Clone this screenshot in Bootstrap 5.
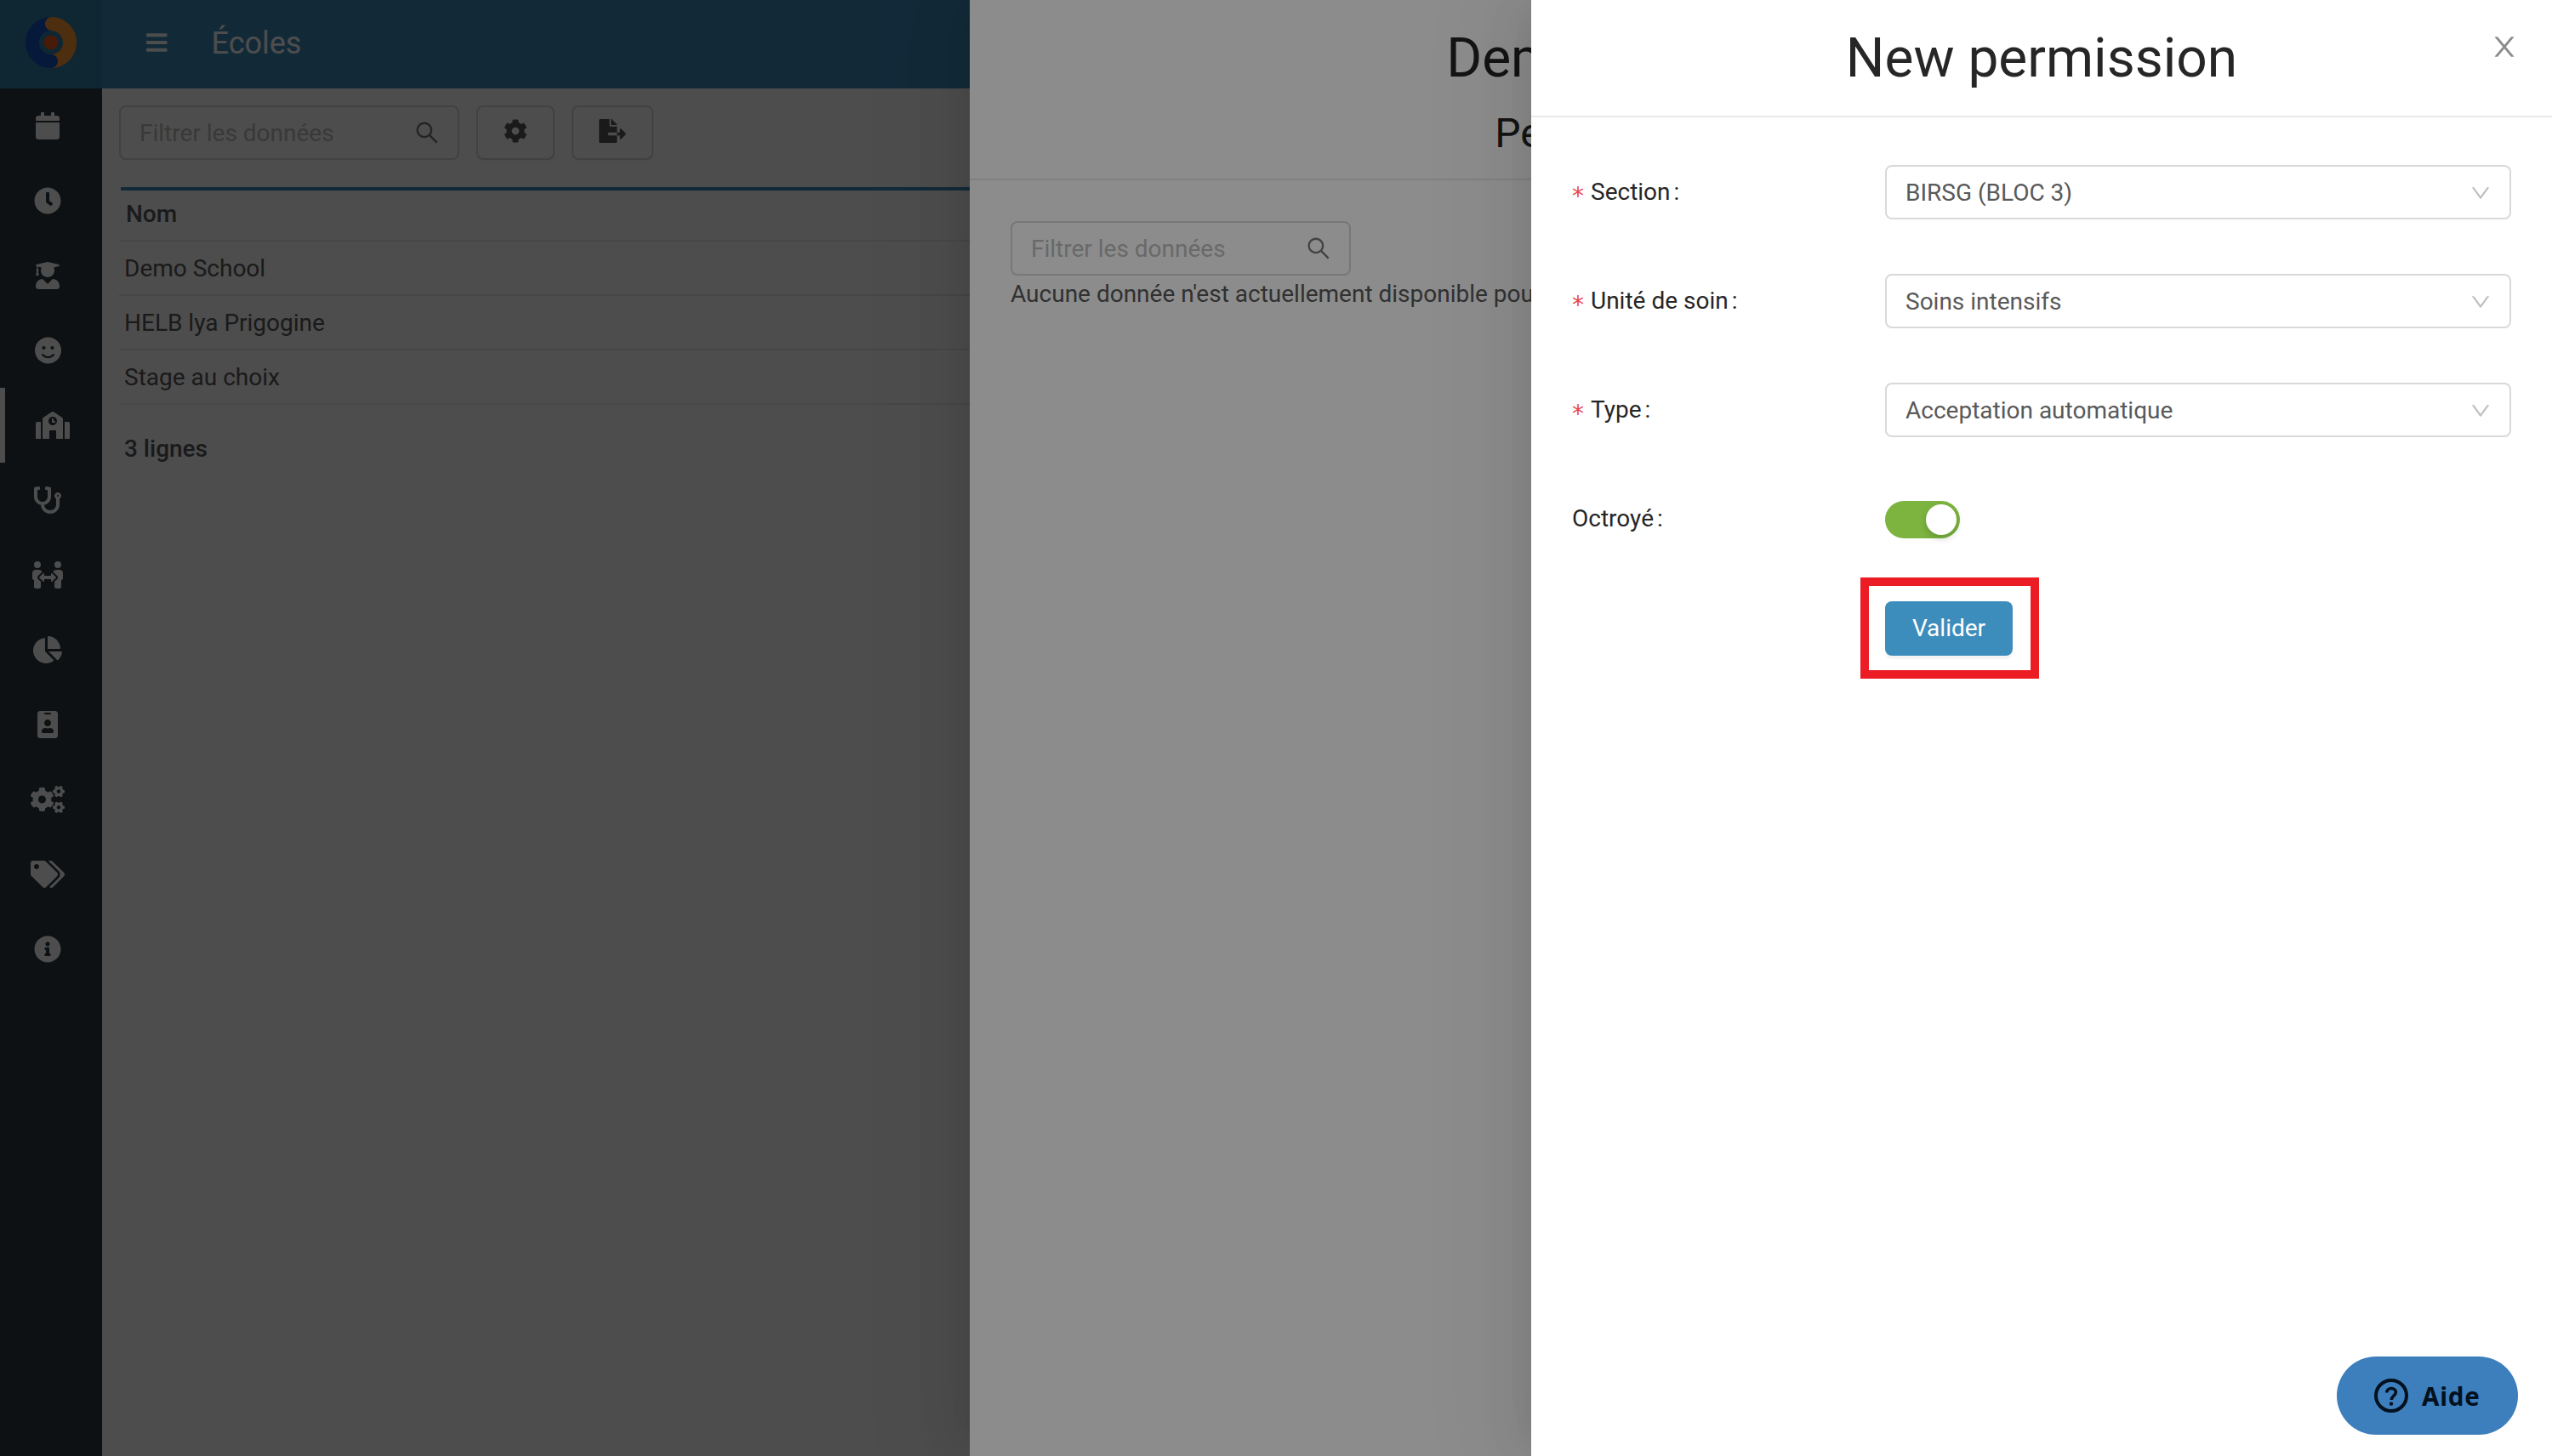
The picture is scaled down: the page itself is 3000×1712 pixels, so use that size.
<!DOCTYPE html>
<html lang="fr">
<head>
  <meta charset="UTF-8" />
  <title>Écoles</title>
  <meta name="viewport" content="width=device-width, initial-scale=1" />
  <link href="https://cdn.jsdelivr.net/npm/bootstrap@5.3.3/dist/css/bootstrap.min.css" rel="stylesheet">
  <style>
    html {
      font-size: 32px;
    }

    body {
      font-family: Roboto, "Liberation Sans", sans-serif;
      font-size: 28px;
      line-height: 44px;
      color: #595959;
      background: #fff;
      height: 100vh;
      overflow: hidden;
    }

    svg {
      fill: currentColor;
      display: block;
      flex: none;
    }

    /* sidebar */
    .side-menu {
      width: 120px;
      background: #2c3b41;
      flex: none;
    }

    .side-logo {
      height: 104px;
      background: #367fa9;
      padding-bottom: 4px;
    }

    .side-menu .nav-link {
      height: 88px;
      padding: 0 8px 1px 0;
      color: #fff;
    }

    .side-menu .nav-link.active {
      border-left: 6px solid #fff;
      padding-right: 2px;
    }

    .side-menu .nav-link svg {
      height: 32px;
    }

    /* page */
    .top-bar {
      height: 104px;
      background: #3c8dbc;
      color: #fff;
      padding: 0 0 4px 52px;
    }

    .top-title {
      font-size: 36px;
      margin-left: 52px;
      padding-top: 2px;
    }

    .page-body {
      padding: 20px;
    }

    .tool-row {
      gap: 20px;
    }

    .filter-box {
      width: 400px;
      height: 64px;
      border: 2px solid #d9d9d9;
      border-radius: 8px;
      padding: 0 22px;
    }

    .filter-box input {
      font-size: 28px;
      line-height: 44px;
      width: 100%;
      min-width: 0;
      border: 0;
      padding: 2px 0 0;
      background: none;
    }

    .filter-box input::placeholder {
      color: #bfbfbf;
      opacity: 1;
    }

    .filter-box svg {
      color: #7a7a7a;
    }

    .btn-tool {
      height: 64px;
      border: 2px solid #d9d9d9;
      border-radius: 8px;
      padding: 0 30px 4px;
      background: #fff;
      color: #595959;
      box-shadow: 0 4px 0 rgba(0, 0, 0, .015);
    }

    .table-wrap {
      margin-top: 32px;
    }

    .table-line {
      height: 4px;
      margin-left: 2px;
      background: #3c8dbc;
    }

    .school-table {
      --bs-table-color: #595959;
      border-color: #f0f0f0;
    }

    .school-table td {
      padding: 10px 6px 8px;
      border-bottom: 2px solid #ebebeb;
    }

    .school-table th {
      padding: 6px 8px 8px;
      border-bottom: 2px solid #ebebeb;
      font-weight: 500;
    }

    .row-total {
      margin: 30px 0 0 6px;
      font-weight: 500;
    }

    /* drawers */
    .mask {
      position: absolute;
      inset: 0;
      background: rgba(0, 0, 0, .45);
    }

    .drawer {
      position: absolute;
      top: 0;
      bottom: 0;
      background: #fff;
      box-shadow: -12px 0 32px -16px rgba(0, 0, 0, .08), -18px 0 56px 0 rgba(0, 0, 0, .05), -24px 0 96px 32px rgba(0, 0, 0, .03);
    }

    .drawer-school {
      left: 1140px;
      width: 1500px;
    }

    .drawer-form {
      right: 0;
      width: 1200px;
    }

    .drawer-head {
      padding: 32px 48px;
      border-bottom: 2px solid #e8e8e8;
      color: #262626;
      text-align: center;
    }

    .drawer-head h1 {
      font-size: 64px;
      font-weight: 400;
      line-height: 72px;
      margin: 0;
      padding-top: 1px;
      height: 72px;
    }

    .drawer-head h2 {
      font-size: 48px;
      font-weight: 400;
      line-height: 42px;
      margin: 32px 0 0;
    }

    .drawer-close {
      position: absolute;
      top: 39px;
      right: 40px;
      color: #8c8c8c;
    }

    /* form */
    .perm-form {
      padding: 56px 48px 0;
    }

    .perm-row {
      display: grid;
      grid-template-columns: 368px 1fr;
      align-items: center;
      height: 64px;
      margin-bottom: 64px;
      color: #262626;
    }

    .perm-row label {
      height: 44px;
    }

    .perm-row label::after {
      content: ":";
      margin-left: 4px;
    }

    .needed::before {
      content: "*";
      display: inline-block;
      width: 14px;
      margin-right: 8px;
      font-family: "DejaVu Sans", sans-serif;
      line-height: 1;
      color: #e8474c;
      vertical-align: -5px;
    }

    .pick {
      height: 64px;
      border: 2px solid #d9d9d9;
      border-radius: 8px;
      padding: 1px 22px 0;
      color: #595959;
    }

    .pick svg {
      color: #bfbfbf;
    }

    .perm-switch.form-check-input {
      width: 88px;
      height: 44px;
      margin: 2px 0 0;
      padding: 4px;
      border: 0;
      border-radius: 44px;
      background: #7db43f;
      display: flex;
      justify-content: flex-end;
    }

    .perm-switch::before {
      content: "";
      width: 36px;
      height: 36px;
      border-radius: 50%;
      background: #fff;
      box-shadow: 0 4px 8px rgba(0, 35, 11, .2);
    }

    .valid-wrap {
      width: 150px;
      padding-top: 1px;
    }

    .btn-valid {
      --bs-btn-color: #fff;
      --bs-btn-bg: #3c8dbc;
      display: block;
      width: 150px;
      height: 64px;
      padding: 0;
      border: 0;
      border-radius: 8px;
      font-size: 28px;
      box-shadow: 0 4px 0 rgba(0, 0, 0, .045);
    }

    .focus-frame {
      position: absolute;
      inset: -27px -31px -27px -29px;
      border: 10px solid #ec1c24;
    }

    .btn-help {
      position: absolute;
      right: 40px;
      bottom: 25px;
      width: 213px;
      height: 92px;
      padding: 0 0 0 44px;
      border: 0;
      border-radius: 46px;
      gap: 16px;
      background: #3d7ebc;
      color: #03111f;
      font: 700 29.5px/44px "Noto Sans", "Open Sans", sans-serif;
      letter-spacing: .8px;
    }

    .btn-help span {
      padding-top: 2px;
    }
  </style>
</head>
<body class="position-relative">
  <div class="d-flex h-100">
    <aside class="side-menu">
      <div class="side-logo d-flex align-items-center justify-content-center">
        <svg width="60" height="60" viewBox="0 0 60 60" stroke-width="16" stroke-linecap="round">
          <path d="M30 8a22 22 0 0 1 0 44" fill="none" stroke="#ff9a35"/>
          <path d="M30 8a22 22 0 0 0 0 44" fill="none" stroke="#1656c4"/>
          <path d="M31 8a22 22 0 0 1 21 22" fill="none" stroke="#ff9a35"/>
          <circle cx="30" cy="30" r="8.5" fill="#f15a24"/>
        </svg>
      </div>
      <nav class="nav flex-column flex-nowrap">
        <a class="nav-link d-flex align-items-center justify-content-center" href="#"><svg viewBox="0 0 448 512"><path d="M12 192h424c6.6 0 12 5.4 12 12v260c0 26.5-21.5 48-48 48H48c-26.5 0-48-21.5-48-48V204c0-6.6 5.4-12 12-12zm436-44v-36c0-26.5-21.5-48-48-48h-48V12c0-6.6-5.4-12-12-12h-40c-6.6 0-12 5.4-12 12v52H160V12c0-6.6-5.4-12-12-12h-40c-6.6 0-12 5.4-12 12v52H48C21.5 64 0 85.5 0 112v36c0 6.6 5.4 12 12 12h424c6.6 0 12-5.4 12-12z"/></svg></a>
        <a class="nav-link d-flex align-items-center justify-content-center" href="#"><svg viewBox="0 0 512 512"><path d="M256,8C119,8,8,119,8,256S119,504,256,504,504,393,504,256,393,8,256,8Zm92.49,313h0l-20,25a16,16,0,0,1-22.49,2.5h0l-67-49.72a40,40,0,0,1-15-31.23V112a16,16,0,0,1,16-16h32a16,16,0,0,1,16,16V256l58,42.5A16,16,0,0,1,348.49,321Z"/></svg></a>
        <a class="nav-link d-flex align-items-center justify-content-center" href="#"><svg viewBox="0 0 448 512"><path d="M319.4 320.6L224 416l-95.4-95.4C57.1 323.7 0 382.2 0 454.4v9.6c0 26.5 21.5 48 48 48h352c26.5 0 48-21.5 48-48v-9.6c0-72.2-57.1-130.7-128.6-133.8zM13.6 79.8l6.4 1.5v58.4c-7 4.2-12 11.5-12 20.3 0 8.4 4.6 15.4 11.1 19.7L3.5 242c-1.7 6.9 2.1 14 7.6 14h41.8c5.5 0 9.3-7.1 7.6-14l-15.6-62.3C51.4 175.4 56 168.4 56 160c0-8.8-5-16.1-12-20.3V87.1l66 15.9c-8.6 17.2-14 36.4-14 57 0 70.7 57.3 128 128 128s128-57.3 128-128c0-20.6-5.3-39.8-14-57l96.3-23.2c18.2-4.4 18.2-27.1 0-31.5l-190.4-46c-13-3.1-26.7-3.1-39.7 0L13.6 48.2c-18.1 4.4-18.1 27.2 0 31.6z"/></svg></a>
        <a class="nav-link d-flex align-items-center justify-content-center" href="#"><svg viewBox="0 0 496 512"><path d="M248 8C111 8 0 119 0 256s111 248 248 248 248-111 248-248S385 8 248 8zm80 168c17.7 0 32 14.3 32 32s-14.3 32-32 32-32-14.3-32-32 14.3-32 32-32zm-160 0c17.7 0 32 14.3 32 32s-14.3 32-32 32-32-14.3-32-32 14.3-32 32-32zm194.8 170.2C334.3 380.4 292.5 400 248 400s-86.3-19.6-114.8-53.8c-13.6-16.3 11-36.7 24.6-20.5 22.4 26.9 55.2 42.2 90.2 42.2s67.8-15.4 90.2-42.2c13.4-16.2 38.1 4.2 24.6 20.5z"/></svg></a>
        <a class="nav-link active d-flex align-items-center justify-content-center" href="#"><svg viewBox="0 0 640 512"><path d="M0 224v272c0 8.84 7.16 16 16 16h80V192H32c-17.67 0-32 14.33-32 32zm360-48h-24v-40c0-4.42-3.58-8-8-8h-16c-4.42 0-8 3.58-8 8v64c0 4.42 3.58 8 8 8h48c4.42 0 8-3.58 8-8v-16c0-4.42-3.58-8-8-8zm137.75-63.96l-160-106.67a32.02 32.02 0 0 0-35.5 0l-160 106.67A32.002 32.002 0 0 0 128 138.66V512h128V368c0-8.84 7.16-16 16-16h96c8.84 0 16 7.16 16 16v144h128V138.67c0-10.7-5.35-20.7-14.25-26.63zM320 256c-44.18 0-80-35.82-80-80s35.82-80 80-80 80 35.82 80 80-35.82 80-80 80zm288-64h-64v320h80c8.84 0 16-7.16 16-16V224c0-17.67-14.33-32-32-32z"/></svg></a>
        <a class="nav-link d-flex align-items-center justify-content-center" href="#"><svg viewBox="0 0 512 512"><path d="M447.1 112c-34.2.5-62.3 28.4-63 62.6-.5 24.3 12.5 45.6 32 56.8V344c0 57.3-50.2 104-112 104-60 0-109.2-44.1-111.9-99.2C265 333.8 320 269.2 320 192V36.6c0-11.4-8.1-21.3-19.3-23.5L237.8.5c-13-2.6-25.6 5.8-28.2 18.8L206.4 35c-2.6 13 5.8 25.6 18.8 28.2l30.7 6.1v121.4c0 52.9-42.2 96.7-95.1 97.2-53.4.5-96.9-42.7-96.9-96V69.4l30.7-6.1c13-2.6 21.4-15.2 18.8-28.2l-3.1-15.7C107.7 6.4 95.1-2 82.1.6L19.3 13C8.1 15.3 0 25.1 0 36.6V192c0 77.3 55.1 142 128.1 156.8C130.7 439.2 208.6 512 304 512c97 0 176-75.4 176-168V231.4c19.1-11.1 32-31.7 32-55.4 0-35.7-29.2-64.5-64.9-64zm.9 80c-8.8 0-16-7.2-16-16s7.2-16 16-16 16 7.2 16 16-7.2 16-16 16z"/></svg></a>
        <a class="nav-link d-flex align-items-center justify-content-center" href="#"><svg viewBox="0 0 576 512"><path d="M96,128A64,64,0,1,0,32,64,64,64,0,0,0,96,128Zm0,176.08a44.11,44.11,0,0,1,13.64-32L181.77,204c1.65-1.55,3.77-2.31,5.61-3.57A63.91,63.91,0,0,0,128,160H64A64,64,0,0,0,0,224v96a32,32,0,0,0,32,32V480a32,32,0,0,0,32,32h64a32,32,0,0,0,32-32V383.61l-50.36-47.53A44.08,44.08,0,0,1,96,304.08ZM480,128a64,64,0,1,0-64-64A64,64,0,0,0,480,128Zm32,32H448a63.91,63.91,0,0,0-59.38,40.42c1.84,1.27,4,2,5.62,3.59l72.12,68.06a44.37,44.37,0,0,1,0,64L416,383.62V480a32,32,0,0,0,32,32h64a32,32,0,0,0,32-32V352a32,32,0,0,0,32-32V224A64,64,0,0,0,512,160ZM444.4,295.34l-72.12-68.06A12,12,0,0,0,352,236v36H224V236a12,12,0,0,0-20.28-8.73L131.6,295.34a12.4,12.4,0,0,0,0,17.47l72.12,68.07A12,12,0,0,0,224,372.14V336H352v36.14a12,12,0,0,0,20.28,8.74l72.12-68.07A12.4,12.4,0,0,0,444.4,295.34Z"/></svg></a>
        <a class="nav-link d-flex align-items-center justify-content-center" href="#"><svg viewBox="0 0 544 512"><path d="M527.79 288H290.5l158.03 158.03c6.04 6.04 15.98 6.53 22.19.68 38.7-36.46 65.32-85.61 73.13-140.86 1.34-9.46-6.51-17.85-16.06-17.85zm-15.83-64.8C503.72 103.74 408.26 8.28 288.8.04 279.68-.59 272 7.1 272 16.24V240h223.77c9.14 0 16.82-7.68 16.19-16.8zM224 288V50.71c0-9.55-8.39-17.4-17.84-16.06C86.99 51.49-4.1 155.6.14 280.37 4.5 408.51 114.83 513.59 243.03 511.98c50.4-.63 96.97-16.87 135.26-44.03 7.9-5.6 8.42-17.23 1.57-24.08L224 288z"/></svg></a>
        <a class="nav-link d-flex align-items-center justify-content-center" href="#"><svg viewBox="0 0 384 512"><path d="M336 0H48C21.5 0 0 21.5 0 48v416c0 26.5 21.5 48 48 48h288c26.5 0 48-21.5 48-48V48c0-26.5-21.5-48-48-48zM144 32h96c8.8 0 16 7.2 16 16s-7.2 16-16 16h-96c-8.8 0-16-7.2-16-16s7.2-16 16-16zm48 128c35.3 0 64 28.7 64 64s-28.7 64-64 64-64-28.7-64-64 28.7-64 64-64zm112 236.8c0 10.6-10 19.2-22.4 19.2H102.4C90 416 80 407.4 80 396.8v-19.2c0-31.8 30.1-57.6 67.2-57.6h5c12.3 5.1 25.7 8 39.8 8s27.6-2.9 39.8-8h5c37.1 0 67.2 25.8 67.2 57.6v19.2z"/></svg></a>
        <a class="nav-link d-flex align-items-center justify-content-center" href="#"><svg viewBox="0 0 640 512"><path id="smallCog" d="M512.1 191l-8.2 14.3c-3 5.3-9.4 7.5-15.1 5.4-11.8-4.4-22.6-10.7-32.1-18.6-4.6-3.8-5.8-10.5-2.8-15.7l8.2-14.3c-6.9-8-12.3-17.3-15.9-27.4h-16.5c-6 0-11.2-4.3-12.2-10.3-2-12-2.1-24.6 0-37.1 1-6 6.2-10.4 12.2-10.4h16.5c3.6-10.1 9-19.4 15.9-27.4l-8.2-14.3c-3-5.2-1.9-11.9 2.8-15.7 9.5-7.9 20.4-14.2 32.1-18.6 5.7-2.1 12.1.1 15.1 5.4l8.2 14.3c10.5-1.9 21.2-1.9 31.7 0L552 6.3c3-5.3 9.4-7.5 15.1-5.4 11.8 4.4 22.6 10.7 32.1 18.6 4.6 3.8 5.8 10.5 2.8 15.7l-8.2 14.3c6.9 8 12.3 17.3 15.9 27.4h16.5c6 0 11.2 4.3 12.2 10.3 2 12 2.1 24.6 0 37.1-1 6-6.2 10.4-12.2 10.4h-16.5c-3.6 10.1-9 19.4-15.9 27.4l8.2 14.3c3 5.2 1.9 11.9-2.8 15.7-9.5 7.9-20.4 14.2-32.1 18.6-5.7 2.1-12.1-.1-15.1-5.4l-8.2-14.3c-10.4 1.9-21.2 1.9-31.7 0zm-10.5-58.8c38.5 29.6 82.4-14.3 52.8-52.8-38.5-29.7-82.4 14.3-52.8 52.8z"/><use href="#smallCog" y="298.7"/><path d="M386.3 286.1l33.7 16.8c10.1 5.8 14.5 18.1 10.5 29.1-8.9 24.2-26.4 46.4-42.6 65.8-7.4 8.9-20.2 11.1-30.3 5.3l-29.1-16.8c-16 13.7-34.6 24.6-54.9 31.7v33.6c0 11.6-8.3 21.6-19.7 23.6-24.6 4.2-50.4 4.4-75.9 0-11.5-2-20-11.9-20-23.6V418c-20.3-7.2-38.9-18-54.9-31.7L74 403c-10 5.8-22.9 3.6-30.3-5.3-16.2-19.4-33.3-41.6-42.2-65.7-4-10.9.4-23.2 10.5-29.1l33.3-16.8c-3.9-20.9-3.9-42.4 0-63.4L12 205.8c-10.1-5.8-14.6-18.1-10.5-29 8.9-24.2 26-46.4 42.2-65.8 7.4-8.9 20.2-11.1 30.3-5.3l29.1 16.8c16-13.7 34.6-24.6 54.9-31.7V57.1c0-11.5 8.2-21.5 19.6-23.5 24.6-4.2 50.5-4.4 76-.1 11.5 2 20 11.9 20 23.6v33.6c20.3 7.2 38.9 18 54.9 31.7l29.1-16.8c10-5.8 22.9-3.6 30.3 5.3 16.2 19.4 33.2 41.6 42.1 65.8 4 10.9.1 23.2-10 29.1l-33.7 16.8c3.9 21 3.9 42.5 0 63.5zm-117.6 21.1c59.2-77-28.7-164.9-105.7-105.7-59.2 77 28.7 164.9 105.7 105.7z"/></svg></a>
        <a class="nav-link d-flex align-items-center justify-content-center" href="#"><svg viewBox="0 0 640 512"><path d="M497.941 225.941L286.059 14.059A48 48 0 0 0 252.118 0H48C21.49 0 0 21.49 0 48v204.118a48 48 0 0 0 14.059 33.941l211.882 211.882c18.744 18.745 49.136 18.746 67.882 0l204.118-204.118c18.745-18.745 18.745-49.137 0-67.882zM112 160c-26.51 0-48-21.49-48-48s21.49-48 48-48 48 21.49 48 48-21.49 48-48 48zm513.941 133.823L421.823 497.941c-18.745 18.745-49.137 18.745-67.882 0l-.36-.36L527.64 323.522c16.999-16.999 26.36-39.6 26.36-63.64s-9.362-46.641-26.36-63.64L331.397 0h48.721a48 48 0 0 1 33.941 14.059l211.882 211.882c18.745 18.745 18.745 49.137 0 67.882z"/></svg></a>
        <a class="nav-link d-flex align-items-center justify-content-center" href="#"><svg viewBox="0 0 512 512"><path d="M256 8C119.043 8 8 119.083 8 256c0 136.997 111.043 248 248 248s248-111.003 248-248C504 119.083 392.957 8 256 8zm0 110c23.196 0 42 18.804 42 42s-18.804 42-42 42-42-18.804-42-42 18.804-42 42-42zm56 254c0 6.627-5.373 12-12 12h-88c-6.627 0-12-5.373-12-12v-24c0-6.627 5.373-12 12-12h12v-64h-12c-6.627 0-12-5.373-12-12v-24c0-6.627 5.373-12 12-12h64c6.627 0 12 5.373 12 12v100h12c6.627 0 12 5.373 12 12v24z"/></svg></a>
      </nav>
    </aside>

    <div class="flex-grow-1">
      <header class="top-bar d-flex align-items-center">
        <svg width="24.5" height="28" viewBox="0 0 448 512"><path d="M16 132h416c8.837 0 16-7.163 16-16V76c0-8.837-7.163-16-16-16H16C7.163 60 0 67.163 0 76v40c0 8.837 7.163 16 16 16zm0 160h416c8.837 0 16-7.163 16-16v-40c0-8.837-7.163-16-16-16H16c-8.837 0-16 7.163-16 16v40c0 8.837 7.163 16 16 16zm0 160h416c8.837 0 16-7.163 16-16v-40c0-8.837-7.163-16-16-16H16c-8.837 0-16 7.163-16 16v40c0 8.837 7.163 16 16 16z"/></svg>
        <span class="top-title">Écoles</span>
      </header>

      <main class="page-body">
        <div class="tool-row d-flex">
          <div class="filter-box d-flex align-items-center">
            <input type="text" placeholder="Filtrer les données">
            <svg width="28" height="28" viewBox="64 64 896 896"><path id="searchIcon" d="M909.6 854.5L649.9 594.8C690.2 542.7 712 479 712 412c0-80.2-31.3-155.4-87.9-212.1-56.6-56.7-132-87.9-212.1-87.9s-155.5 31.3-212.1 87.9C143.2 256.5 112 331.8 112 412c0 80.1 31.3 155.5 87.9 212.1C256.5 680.8 331.8 712 412 712c67 0 130.6-21.8 182.7-62l259.7 259.6a8.2 8.2 0 0 0 11.6 0l43.6-43.5a8.2 8.2 0 0 0 0-11.6zM570.4 570.4C528 612.7 471.8 636 412 636s-116-23.3-158.4-65.6C211.3 528 188 471.8 188 412s23.3-116.1 65.6-158.4C296 211.3 352.2 188 412 188s116.1 23.2 158.4 65.6S636 352.2 636 412s-23.3 116.1-65.6 158.4z"/></svg>
          </div>
          <button class="btn btn-tool d-flex align-items-center" type="button">
            <svg width="28" height="28" viewBox="0 0 512 512"><path d="M487.4 315.7l-42.6-24.6c4.3-23.2 4.3-47 0-70.2l42.6-24.6c4.9-2.8 7.1-8.6 5.5-14-11.1-35.6-30-67.8-54.7-94.6-3.8-4.1-10-5.1-14.8-2.3L380.8 110c-17.9-15.4-38.5-27.3-60.8-35.1V25.8c0-5.6-3.9-10.5-9.4-11.7-36.7-8.2-74.3-7.8-109.2 0-5.5 1.2-9.4 6.1-9.4 11.7V75c-22.2 7.9-42.8 19.8-60.8 35.1L88.7 85.5c-4.9-2.8-11-1.9-14.8 2.3-24.7 26.7-43.6 58.9-54.7 94.6-1.7 5.4.6 11.2 5.5 14L67.3 221c-4.3 23.2-4.3 47 0 70.2l-42.6 24.6c-4.9 2.8-7.1 8.6-5.5 14 11.1 35.6 30 67.8 54.7 94.6 3.8 4.1 10 5.1 14.8 2.3l42.6-24.6c17.9 15.4 38.5 27.3 60.8 35.1v49.2c0 5.6 3.9 10.5 9.4 11.7 36.7 8.2 74.3 7.8 109.2 0 5.5-1.2 9.4-6.1 9.4-11.7v-49.2c22.2-7.9 42.8-19.8 60.8-35.1l42.6 24.6c4.9 2.8 11 1.9 14.8-2.3 24.7-26.7 43.6-58.9 54.7-94.6 1.5-5.5-.7-11.3-5.6-14.1zM256 336c-44.1 0-80-35.9-80-80s35.9-80 80-80 80 35.9 80 80-35.9 80-80 80z"/></svg>
          </button>
          <button class="btn btn-tool d-flex align-items-center" type="button">
            <svg width="32" height="28" viewBox="0 0 576 512"><path d="M384 121.9c0-6.3-2.5-12.4-7-16.9L279.1 7c-4.5-4.5-10.6-7-17-7H256v128h128zM571 308l-95.7-96.4c-10.1-10.1-27.4-3-27.4 11.3V288h-64v64h64v65.2c0 14.3 17.3 21.4 27.4 11.3L571 332c6.6-6.6 6.6-17.4 0-24zm-379 28v-32c0-8.8 7.2-16 16-16h176V160H248c-13.2 0-24-10.8-24-24V0H24C10.7 0 0 10.7 0 24v464c0 13.3 10.7 24 24 24h336c13.3 0 24-10.7 24-24V352H208c-8.8 0-16-7.2-16-16z"/></svg>
          </button>
        </div>

        <div class="table-wrap">
          <div class="table-line"></div>
          <table class="table school-table mb-0">
            <thead>
              <tr><th>Nom</th></tr>
            </thead>
            <tbody>
              <tr><td>Demo School</td></tr>
              <tr><td>HELB lya Prigogine</td></tr>
              <tr><td>Stage au choix</td></tr>
            </tbody>
          </table>
          <p class="row-total">3 lignes</p>
        </div>
      </main>
    </div>
  </div>

  <div class="mask"></div>

  <section class="drawer drawer-school">
    <div class="drawer-head">
      <h1>Demo School</h1>
      <h2>Permissions</h2>
    </div>
    <div class="p-4">
      <div class="filter-box d-flex align-items-center">
        <input type="text" placeholder="Filtrer les données">
        <svg width="28" height="28" viewBox="64 64 896 896"><use href="#searchIcon"/></svg>
      </div>
      <div>Aucune donnée n'est actuellement disponible pour</div>
    </div>
  </section>

  <div class="mask"></div>

  <section class="drawer drawer-form">
    <div class="drawer-head">
      <h1>New permission</h1>
      <svg class="drawer-close" width="32" height="32" viewBox="64 64 896 896"><path d="M563.8 512l262.5-312.9c4.4-5.2.7-13.1-6.1-13.1h-79.8c-4.7 0-9.2 2.1-12.3 5.7L511.6 449.8 295.1 191.7c-3-3.6-7.5-5.7-12.3-5.7H203c-6.8 0-10.5 7.9-6.1 13.1L459.4 512 196.9 824.9A7.95 7.95 0 0 0 203 838h79.8c4.7 0 9.2-2.1 12.3-5.7l216.5-258.1 216.5 258.1c3 3.6 7.5 5.7 12.3 5.7h79.8c6.8 0 10.5-7.9 6.1-13.1L563.8 512z"/></svg>
    </div>
    <form class="perm-form">
      <div class="perm-row">
        <label class="needed">Section</label>
        <div class="pick d-flex align-items-center justify-content-between">
          BIRSG (BLOC 3)
          <svg width="24" height="24" viewBox="64 64 896 896"><path id="downIcon" d="M884 256h-75c-5.1 0-9.9 2.5-12.9 6.6L512 654.2 227.9 262.6c-3-4.1-7.8-6.6-12.9-6.6h-75c-6.5 0-10.3 7.4-6.5 12.7l352.6 486.1c12.8 17.6 39 17.6 51.7 0l352.6-486.1c3.9-5.3.1-12.7-6.4-12.7z"/></svg>
        </div>
      </div>
      <div class="perm-row">
        <label class="needed">Unité de soin</label>
        <div class="pick d-flex align-items-center justify-content-between">
          Soins intensifs
          <svg width="24" height="24" viewBox="64 64 896 896"><use href="#downIcon"/></svg>
        </div>
      </div>
      <div class="perm-row">
        <label class="needed">Type</label>
        <div class="pick d-flex align-items-center justify-content-between">
          Acceptation automatique
          <svg width="24" height="24" viewBox="64 64 896 896"><use href="#downIcon"/></svg>
        </div>
      </div>
      <div class="perm-row">
        <label>Octroyé</label>
        <div class="perm-switch form-check-input" role="switch" aria-checked="true"></div>
      </div>
      <div class="perm-row">
        <span></span>
        <div class="valid-wrap position-relative">
          <button class="btn btn-valid" type="button">Valider</button>
          <div class="focus-frame"></div>
        </div>
      </div>
    </form>
  </section>

  <button class="btn btn-help d-flex align-items-center" type="button">
    <svg width="40" height="40" viewBox="0 0 40 40">
      <circle cx="20" cy="20" r="18" fill="none" stroke="currentColor" stroke-width="4"/>
      <path d="M14.8 16.5c0-3.3 2.3-5 5.3-5 3.1 0 5.3 1.9 5.3 4.6 0 3.9-5.2 4.3-5.2 9" fill="none" stroke="currentColor" stroke-width="3.6"/>
      <circle cx="20" cy="29.6" r="2.2"/>
    </svg>
    <span>Aide</span>
  </button>

  <script src="https://cdn.jsdelivr.net/npm/bootstrap@5.3.3/dist/js/bootstrap.bundle.min.js"></script>
</body>
</html>
